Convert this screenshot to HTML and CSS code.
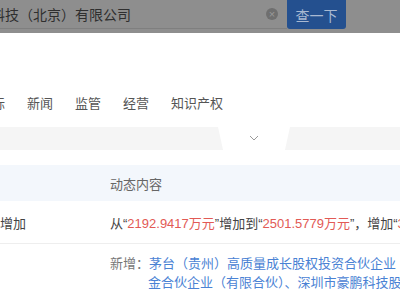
FILE: index.html
```html
<!DOCTYPE html>
<html lang="zh-CN">
<head>
  <meta charset="UTF-8" />
  <title>企业动态</title>
  <link rel="stylesheet" href="styles.css">
</head>
<body>
  <!-- 搜索栏 -->
  <div class="search-bar">
    <div class="search-input">
      <span class="query">中科技（北京）有限公司</span>
      <span class="clear">×</span>
    </div>
    <button class="search-btn">查一下</button>
  </div>

  <!-- 标签 -->
  <div class="tabs">
    <span class="tab">指标</span>
    <span class="tab">新闻</span>
    <span class="tab">监管</span>
    <span class="tab">经营</span>
    <span class="tab">知识产权</span>
  </div>

  <div class="fold-band">
    <div class="fold-tab">
      <svg width="10" height="6" viewBox="0 0 10 6"><path d="M1 1 L5 5 L9 1" fill="none" stroke="#9a9a9a" stroke-width="1"/></svg>
    </div>
  </div>

  <!-- 动态表格 -->
  <table class="news">
    <thead>
      <tr>
        <th class="col-type"></th>
        <th>动态内容</th>
      </tr>
    </thead>
    <tbody>
      <tr>
        <td class="col-type">注册资本增加</td>
        <td>从“<span class="red">2192.9417万元</span>”增加到“<span class="red">2501.5779万元</span>”，增加“<span class="red">308.6362万元</span>”</td>
      </tr>
      <tr class="multi">
        <td class="col-type"></td>
        <td>
          <div class="line"><span class="label">新增：</span><span class="blue">茅台（贵州）高质量成长股权投资合伙企业（有限</span></div>
          <div class="line indent"><span class="blue">金合伙企业（有限合伙）、深圳市豪鹏科技股份有限公司</span></div>
        </td>
      </tr>
    </tbody>
  </table>
</body>
</html>
```

FILE: styles.css
```css
body {
  margin: 0;
  width: 400px;
  height: 300px;
  overflow: hidden;
  background: white;
  font-family: "Liberation Sans", "Noto Sans CJK SC", sans-serif;
  color: #555;
}
.search-bar {
  display: flex;
  height: 33px;
  background: #8e8e8e;
}
.search-input {
  width: 287px;
  height: 29px;
  display: flex;
  align-items: center;
  border-bottom: 1px solid #7f7f7f;
  box-sizing: border-box;
  overflow: hidden;
}
.query {
  margin-left: -23px;
  font-size: 14px;
  color: #2f2f2f;
  white-space: nowrap;
  flex: 1;
}
.clear {
  width: 12px;
  height: 12px;
  margin-right: 9px;
  border-radius: 50%;
  background: #6f6f6f;
  color: #999;
  font-size: 11px;
  line-height: 12px;
  text-align: center;
}
.search-btn {
  width: 59px;
  height: 29px;
  border: none;
  border-radius: 0 0 3px 3px;
  background: #24508f;
  color: #a9b9d2;
  font-family: "Noto Sans CJK SC", sans-serif;
  font-size: 14px;
  padding: 0;
}
.tabs {
  display: flex;
  gap: 22px;
  margin-left: -21px;
  padding-top: 60px;
  height: 34px;
  font-family: "Noto Sans CJK SC", sans-serif;
  font-size: 13px;
  line-height: 20px;
  white-space: nowrap;
}
.fold-band {
  height: 23px;
  background: #f5f5f5;
  position: relative;
}
.fold-tab {
  position: absolute;
  left: 218px;
  top: 0;
  width: 72px;
  height: 23px;
  background: white;
  clip-path: polygon(0 0, 100% 0, 93% 100%, 7% 100%);
  display: flex;
  justify-content: center;
  padding-top: 8px;
  box-sizing: border-box;
}
.news {
  margin-top: 15px;
  width: 560px;
  border-collapse: collapse;
  font-family: "Liberation Sans", "Noto Sans CJK SC", sans-serif;
  font-size: 13px;
  white-space: nowrap;
}
.news th {
  background: #f3f7fc;
  font-weight: normal;
  text-align: left;
  color: #666;
  height: 36px;
  padding: 0;
}
.news td {
  padding: 0;
  height: 42px;
  color: #444;
  border-bottom: 1px solid #eeeeee;
}
.col-type {
  width: 110px;
  text-indent: -52px;
}
.red {
  color: #e25a55;
}
.blue {
  color: #4a82d4;
}
.label {
  color: #777;
}
.multi td {
  border-bottom: none;
  vertical-align: top;
  padding-top: 10px;
}
.line {
  line-height: 19px;
}
.indent {
  padding-left: 38px;
}
```
